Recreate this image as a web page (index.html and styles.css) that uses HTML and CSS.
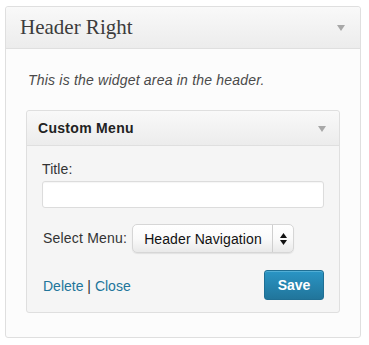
FILE: index.html
```html
<!DOCTYPE html>
<html lang="en">
<head>
<meta charset="utf-8">
<title>Header Right</title>
<link rel="stylesheet" href="styles.css">
</head>
<body>
<div class="sidebar">
  <div class="sidebar-head">
    <h3 class="sidebar-title">Header Right</h3>
    <svg class="toggle" width="8" height="6" viewBox="0 0 8 6"><polygon points="0,0 8,0 4,6" fill="#a8a8a8"/></svg>
  </div>
  <div class="sidebar-body">
    <p class="description">This is the widget area in the header.</p>
    <div class="widget">
      <div class="widget-head">
        <h4 class="widget-title">Custom Menu</h4>
        <svg class="toggle" width="8" height="6" viewBox="0 0 8 6"><polygon points="0,0 8,0 4,6" fill="#a8a8a8"/></svg>
      </div>
      <div class="widget-body">
        <label class="field-label" for="title">Title:</label>
        <input class="text-input" id="title" type="text">
        <div class="select-row">
          <span class="select-label">Select Menu:</span>
          <div class="select-box">
            <span class="select-value">Header Navigation</span>
            <span class="select-arrows">
              <svg width="7" height="12" viewBox="0 0 7 12"><polygon points="3.5,0 7,5 0,5" fill="#111"/><polygon points="0,7 7,7 3.5,12" fill="#111"/></svg>
            </span>
          </div>
        </div>
        <div class="actions">
          <div class="links"><a href="#" class="link">Delete</a><span class="sep"> | </span><a href="#" class="link">Close</a></div>
          <button class="save-btn" type="button">Save</button>
        </div>
      </div>
    </div>
  </div>
</div>
</body>
</html>
```
FILE: styles.css
```css
* { box-sizing: border-box; }
html, body { margin: 0; padding: 0; background: #ffffff; }
body { font-family: "Liberation Sans", Arial, Helvetica, sans-serif; color: #333; }

.sidebar {
  width: 356px;
  margin: 6px 0 0 5px;
  border: 1px solid #dfdfdf;
  border-radius: 3px;
  background: #fcfcfc;
}
.sidebar-head {
  height: 42px;
  display: flex;
  align-items: center;
  justify-content: space-between;
  padding: 0 15px 0 14px;
  border-bottom: 1px solid #dfdfdf;
  border-radius: 3px 3px 0 0;
  background: linear-gradient(to bottom, #f9f9f9, #ececec);
}
.sidebar-title {
  margin: 0;
  font-family: "Liberation Serif", "Times New Roman", serif;
  font-weight: normal;
  font-size: 21px;
  line-height: 41px;
  color: #3c3c3c;
}
.toggle { display: block; margin-top: 1px; }

.sidebar-body { padding: 23px 20px 24px 20px; }
.description {
  margin: 0 0 22px 2px;
  font-size: 14px;
  line-height: 16px;
  font-style: italic;
  letter-spacing: 0.2px;
  color: #4a4a4a;
}

.widget {
  border: 1px solid #dfdfdf;
  border-radius: 3px;
  background: #f5f5f5;
}
.widget-head {
  height: 35px;
  display: flex;
  align-items: center;
  justify-content: space-between;
  padding: 0 13px 0 11px;
  border-bottom: 1px solid #dfdfdf;
  border-radius: 3px 3px 0 0;
  background: linear-gradient(to bottom, #f9f9f9, #ececec);
}
.widget-title {
  margin: 0;
  font-size: 14px;
  font-weight: bold;
  line-height: 17px;
  color: #222;
  letter-spacing: 0.3px;
}
.widget-body { padding: 15px 15px 12px 15px; }

.field-label {
  display: block;
  font-size: 14px;
  line-height: 17px;
  color: #333;
  margin-bottom: 3px;
  letter-spacing: 0.1px;
}
.text-input {
  display: block;
  width: 100%;
  height: 27px;
  margin: 0;
  border: 1px solid #dcdcdc;
  border-radius: 3px;
  background: #ffffff;
  font: inherit;
  box-shadow: inset 0 1px 1px rgba(0,0,0,0.04);
}

.select-row {
  display: flex;
  align-items: center;
  margin-top: 16px;
  gap: 5px;
}
.select-label {
  font-size: 14px;
  line-height: 17px;
  color: #333;
  padding-left: 1px;
  letter-spacing: 0.2px;
}
.select-box {
  display: flex;
  align-items: stretch;
  width: 162px;
  height: 29px;
  border: 1px solid #d6d6d6;
  border-radius: 5px;
  background: linear-gradient(to bottom, #ffffff 0%, #fafafa 50%, #e9e9e9 100%);
  box-shadow: 0 1px 1px rgba(0,0,0,0.08);
}
.select-value {
  flex: 1;
  display: flex;
  align-items: center;
  padding-left: 11px;
  font-size: 14px;
  color: #111;
  letter-spacing: 0.1px;
  border-right: 1px solid #cfcfcf;
}
.select-arrows {
  width: 20px;
  display: flex;
  align-items: center;
  justify-content: center;
}
.select-arrows svg { display: block; }

.actions {
  display: flex;
  align-items: center;
  justify-content: space-between;
  margin-top: 17px;
}
.links {
  font-size: 14px;
  line-height: 17px;
  padding-left: 1px;
  padding-top: 3px;
}
.link { color: #21759b; text-decoration: none; }
.sep { color: #333; }
.save-btn {
  width: 60px;
  height: 30px;
  margin: 0;
  padding: 0;
  border: 1px solid #1f6f94;
  border-radius: 3px;
  background: linear-gradient(to bottom, #2a95c5, #21759b);
  color: #ffffff;
  font-family: "Liberation Sans", Arial, sans-serif;
  font-size: 14px;
  font-weight: bold;
  box-shadow: inset 0 1px 0 rgba(120,200,230,0.5);
}
```
